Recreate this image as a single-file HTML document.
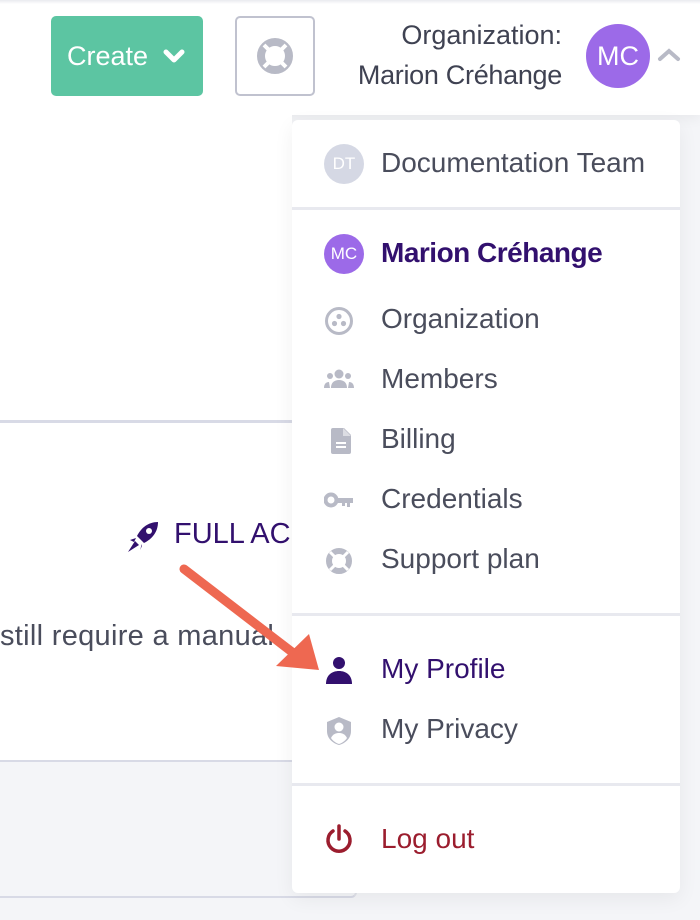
<!DOCTYPE html>
<html><head><meta charset="utf-8"><style>
*{margin:0;padding:0;box-sizing:border-box}
body{width:700px;height:920px;overflow:hidden;background:#f4f5f8;font-family:"Liberation Sans",sans-serif;position:relative;color:#4a4d5c}
.abs{position:absolute}
.hdr{left:0;top:0;width:700px;height:115px;background:#fff;box-shadow:0 4px 12px rgba(0,0,0,.05)}
.topshadow{left:0;top:0;width:700px;height:4px;background:linear-gradient(#e9eaef,#fff)}
.create{left:51px;top:16px;width:152px;height:80px;background:#5cc5a2;border-radius:5px;color:#fff;font-size:27px;line-height:80px;padding-left:16px}
.help{left:235px;top:16px;width:80px;height:80px;border:2px solid #c0c2cf;border-radius:5px}
.org1{right:138px;top:20px;font-size:27px;color:#3f4252}
.org2{right:138px;top:60px;font-size:27px;color:#3f4252;letter-spacing:-.3px}
.av{left:586px;top:24px;width:64px;height:64px;border-radius:50%;background:#9c6ae8;color:#fff;font-size:27px;line-height:64px;text-align:center}
.content{left:0;top:115px;width:292px;height:645px;background:#fff}
.line1{left:0;top:420px;width:292px;height:3px;background:#d8dae6}
.line2{left:0;top:760px;width:292px;height:2px;background:#d8dae6}
.greybox{left:0;top:762px;width:357px;height:136px;background:#f4f5f8;border-bottom:2px solid #d8dae6;border-right:2px solid #e0e2ea;border-radius:0 0 6px 0}
.full{left:174px;top:518px;font-size:29px;color:#32106e;width:118px;overflow:hidden;white-space:nowrap}
.stillwrap{left:0;top:620px;width:292px;height:40px;overflow:hidden}
.still{position:absolute;left:0;top:0;font-size:29px;color:#4a4d5c;white-space:nowrap;letter-spacing:.3px}
.dd{left:292px;top:120px;width:388px;height:773px;background:#fff;border-radius:6px;box-shadow:0 6px 20px rgba(0,0,0,.06)}
.sep{left:292px;width:388px;height:3px;background:#e8e9ef}
.it{left:381px;font-size:28px;color:#4a4d5c;white-space:nowrap}
.ic{left:324px}
.dot{width:40px;height:40px;border-radius:50%;color:#fff;font-size:17px;line-height:40px;text-align:center}
</style></head><body>
<div class="abs hdr"></div><div class="abs topshadow"></div>
<div class="abs create">Create <svg width="24" height="22" viewBox="0 0 24 22" style="vertical-align:-2px;margin-left:6px"><path d="M4 7l8 8 8-8" stroke="#fff" stroke-width="5" fill="none" stroke-linecap="round" stroke-linejoin="round"/></svg></div>
<div class="abs help"><svg class="abs" style="left:18px;top:18px" width="40" height="40" viewBox="0 0 40 40"><circle cx="20" cy="20" r="14" fill="none" stroke="#b8bac6" stroke-width="8"/><g stroke="#fff" stroke-width="4"><path d="M9 9l6 6M31 9l-6 6M9 31l6-6M31 31l-6-6"/></g></svg></div>
<div class="abs org1">Organization:</div>
<div class="abs org2">Marion Créhange</div>
<div class="abs av">MC</div>
<svg class="abs" style="left:656px;top:46px" width="26" height="18" viewBox="0 0 26 18"><path d="M4 13l9-8 9 8" stroke="#b8bac6" stroke-width="4" fill="none" stroke-linecap="round"/></svg>
<div class="abs content"></div>
<div class="abs line1"></div>
<div class="abs line2"></div>
<div class="abs greybox"></div>
<svg class="abs" style="left:126px;top:520px" width="34" height="34" viewBox="0 0 34 34"><path d="M32 2C22 2 15 8 11 16l7 7c8-4 14-11 14-21z" fill="#32106e"/><circle cx="23" cy="11" r="3" fill="#fff"/><path d="M10 18l-6 2 4 2zM16 24l-2 6 2-4zM9 21l-7 11 11-7z" fill="#32106e"/></svg>
<div class="abs full">FULL ACCESS</div>
<div class="abs stillwrap"><div class="still">still require a manual</div></div>
<div class="abs dd"></div>
<div class="abs sep" style="top:207px"></div>
<div class="abs sep" style="top:613px"></div>
<div class="abs sep" style="top:783px"></div>
<div class="abs ic dot" style="top:144px;background:#d5d8e4">DT</div>
<div class="abs it" style="top:147px">Documentation Team</div>
<div class="abs ic dot" style="top:234px;background:#9c6ae8">MC</div>
<div class="abs it" style="top:237px;color:#32106e;font-weight:bold;letter-spacing:-.5px">Marion Créhange</div>
<svg class="abs ic" style="top:306px" width="30" height="30" viewBox="0 0 30 30"><circle cx="15" cy="15" r="12.5" fill="none" stroke="#b8bac6" stroke-width="3"/><circle cx="15" cy="10.5" r="2.6" fill="#b8bac6"/><circle cx="10.5" cy="17.5" r="2.6" fill="#b8bac6"/><circle cx="19.5" cy="17.5" r="2.6" fill="#b8bac6"/></svg>
<div class="abs it" style="top:303px">Organization</div>
<svg class="abs ic" style="top:368px" width="30" height="24" viewBox="0 0 30 24"><circle cx="15" cy="6" r="4.5" fill="#b8bac6"/><circle cx="6" cy="8" r="3" fill="#b8bac6"/><circle cx="24" cy="8" r="3" fill="#b8bac6"/><path d="M7 20c0-6 4-8 8-8s8 2 8 8zM0 20c0-4 2-6 5-6l1 6zM30 20c0-4-2-6-5-6l-1 6z" fill="#b8bac6"/></svg>
<div class="abs it" style="top:363px">Members</div>
<svg class="abs" style="left:331px;top:428px" width="22" height="26" viewBox="0 0 22 26"><path d="M2 0h11l7 7v17a2 2 0 0 1-2 2H2a2 2 0 0 1-2-2V2a2 2 0 0 1 2-2z" fill="#b8bac6"/><path d="M12 0v8h8" fill="#fff" opacity=".5"/><path d="M5 15h10M5 19h10" stroke="#fff" stroke-width="2"/></svg>
<div class="abs it" style="top:423px">Billing</div>
<svg class="abs ic" style="top:490px" width="30" height="20" viewBox="0 0 30 20"><circle cx="7" cy="10" r="5.5" fill="none" stroke="#b8bac6" stroke-width="4"/><path d="M12 8h17v5h-3v4h-3v-4h-2v3h-3v-3h-6z" fill="#b8bac6"/></svg>
<div class="abs it" style="top:483px">Credentials</div>
<svg class="abs ic" style="top:546px" width="30" height="30" viewBox="0 0 30 30"><circle cx="15" cy="15" r="10" fill="none" stroke="#b8bac6" stroke-width="6"/><g stroke="#fff" stroke-width="3"><path d="M6 6l5 5M24 6l-5 5M6 24l5-5M24 24l-5-5"/></g></svg>
<div class="abs it" style="top:543px">Support plan</div>
<svg class="abs ic" style="top:656px" width="30" height="30" viewBox="0 0 30 30"><circle cx="15" cy="7" r="6" fill="#32106e"/><path d="M2 28c0-9 6-13 13-13s13 4 13 13z" fill="#32106e"/></svg>
<div class="abs it" style="top:653px;color:#32106e">My Profile</div>
<svg class="abs ic" style="top:716px" width="30" height="30" viewBox="0 0 30 30"><path d="M15 1l12 5v9c0 7-5 12-12 14C8 27 3 22 3 15V6z" fill="#b8bac6"/><circle cx="15" cy="11" r="4.5" fill="#fff"/><path d="M7 22c2-4 5-5 8-5s6 1 8 5c-2 3-5 5-8 6-3-1-6-3-8-6z" fill="#fff"/></svg>
<div class="abs it" style="top:713px">My Privacy</div>
<svg class="abs ic" style="top:824px" width="30" height="32" viewBox="0 0 30 32"><path d="M9 7a11 11 0 1 0 12 0" fill="none" stroke="#9b1d2e" stroke-width="3.5" stroke-linecap="round"/><path d="M15 2v13" stroke="#9b1d2e" stroke-width="3.5" stroke-linecap="round"/></svg>
<div class="abs it" style="top:823px;color:#9b1d2e">Log out</div>
<svg class="abs" style="left:0;top:0" width="700" height="920" viewBox="0 0 700 920"><path d="M184 569L292 652" stroke="#ee6851" stroke-width="9" stroke-linecap="round"/><path d="M319 670L276 666L309 634z" fill="#ee6851"/></svg>
</body></html>
